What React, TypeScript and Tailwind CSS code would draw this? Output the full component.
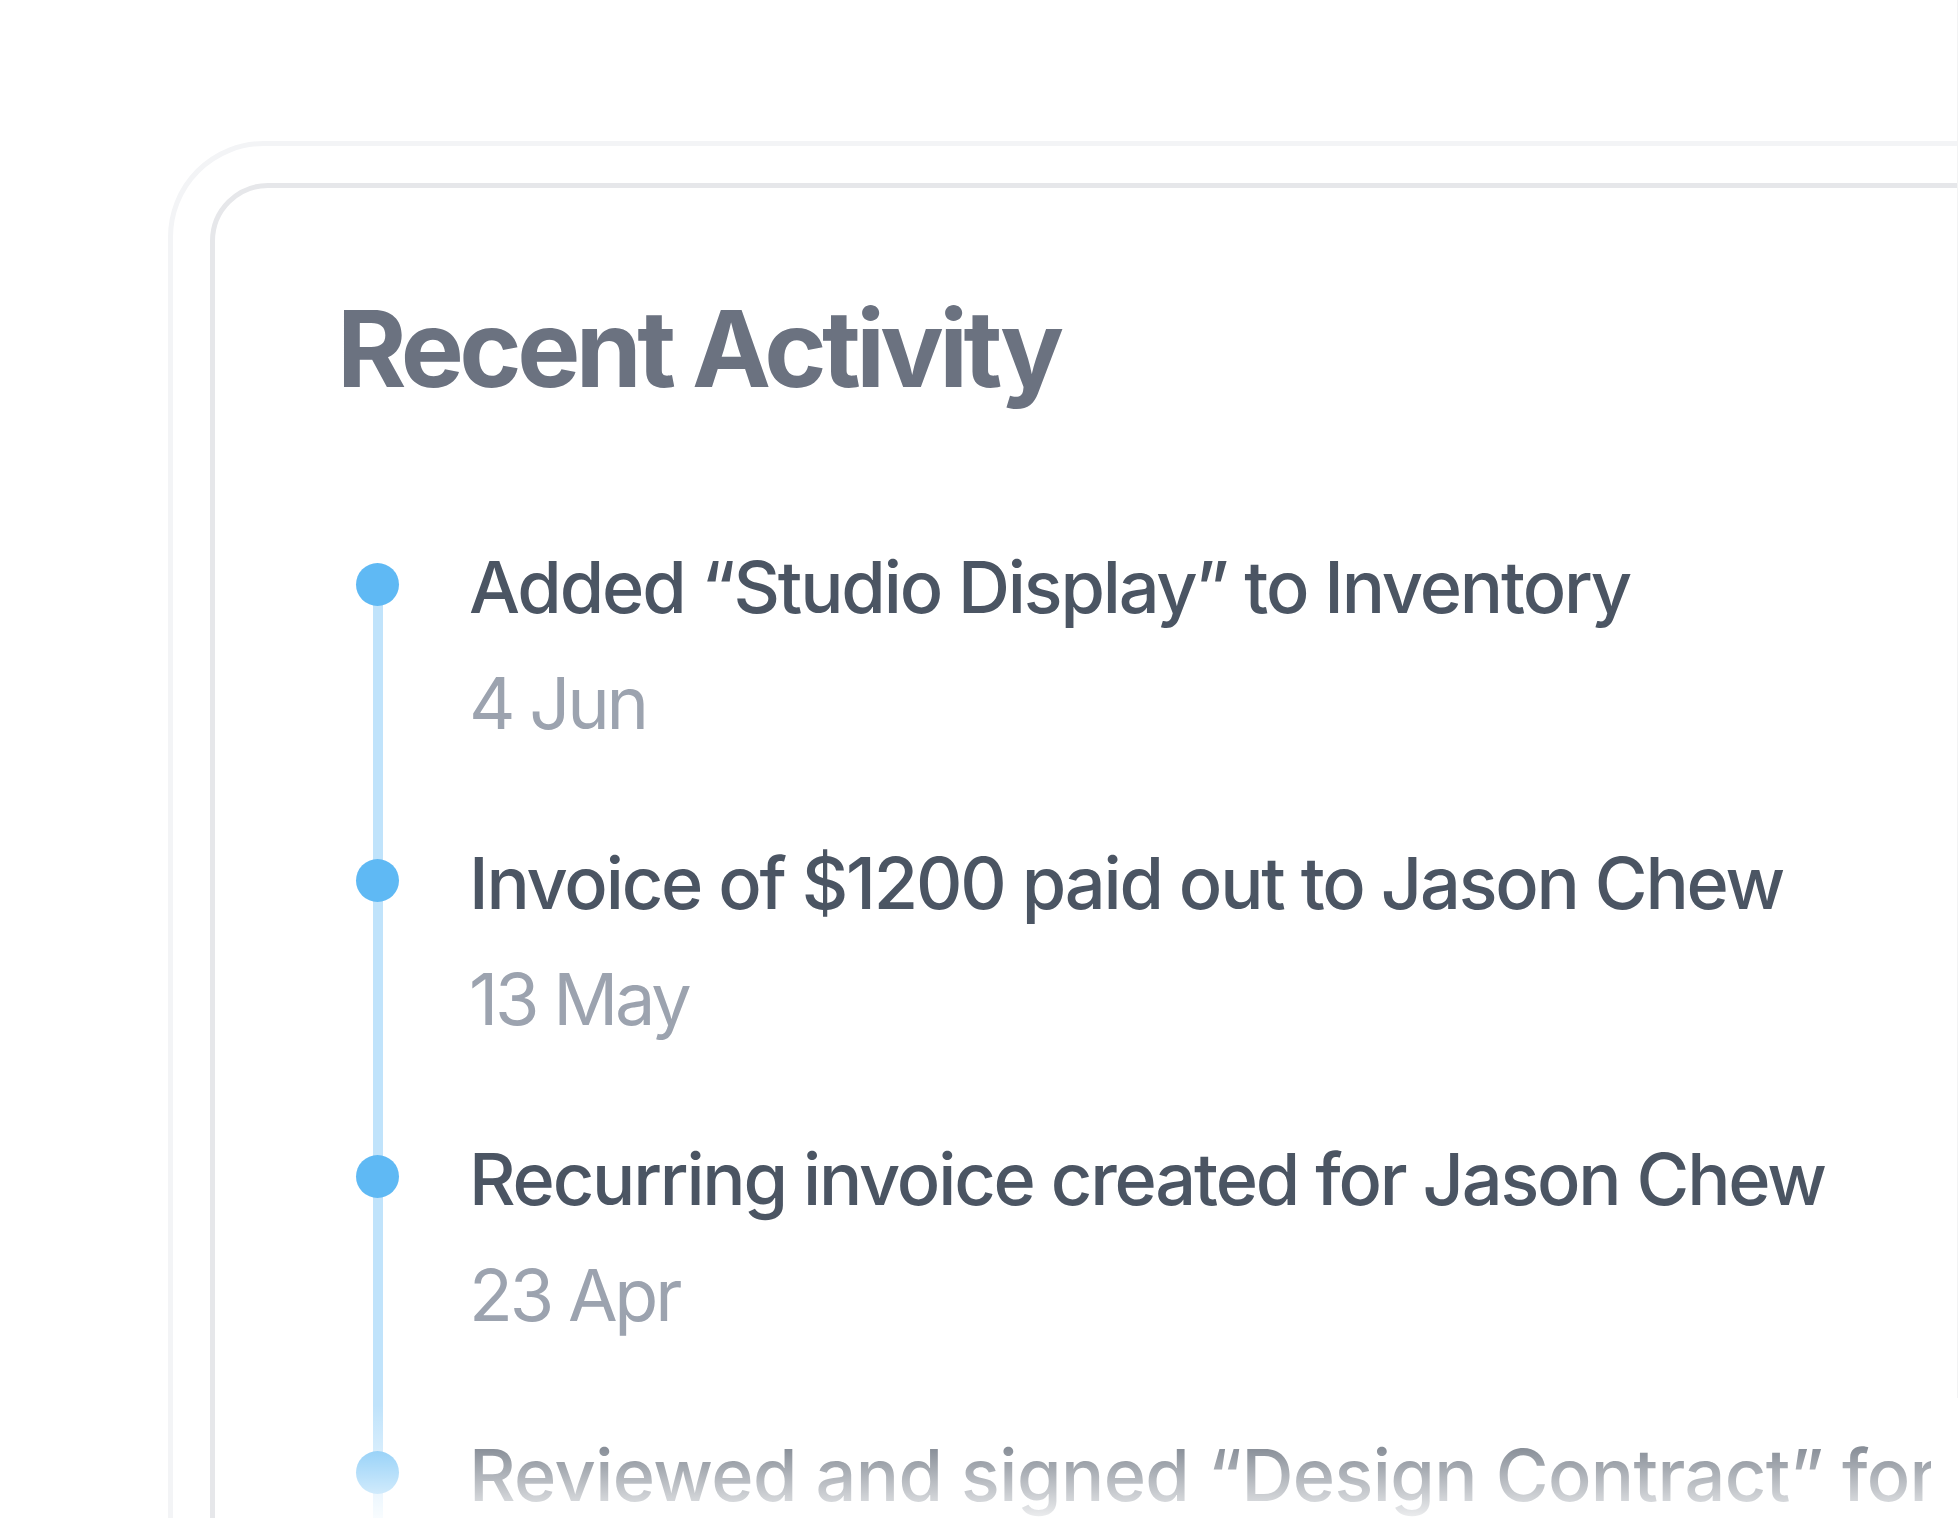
const activity = [
  { title: "Added “Studio Display” to Inventory", date: "4 Jun" },
  { title: "Invoice of $1200 paid out to Jason Chew", date: "13 May" },
  { title: "Recurring invoice created for Jason Chew", date: "23 Apr" },
  { title: "Reviewed and signed “Design Contract” for Jason Chew", date: "2 Apr" },
];

function TimelineItem({ title, date, last }: { title: string; date: string; last?: boolean }) {
  return (
    <li className="flex pb-[108px]">
      <div className="w-[113px] shrink-0 pt-[12px]">
        <span className="relative block h-[43px] w-[43px] rounded-full bg-[#5fb9f4]" />
      </div>
      <div className="w-[1462px] whitespace-nowrap">
        {last ? (
          // the faded last row runs off the card, clipped at the column edge
          <div className="-mb-[20px] overflow-hidden pb-[20px]">
            <p className="text-[72px] font-medium leading-none tracking-[-0.008em] text-[#4b5563]">{title}</p>
          </div>
        ) : (
          <p className="text-[72px] font-medium leading-none tracking-[-0.03em] text-[#4b5563]">{title}</p>
        )}
        <p className="mt-[44px] text-[72px] leading-none tracking-[-0.045em] text-[#9ca3af]">{date}</p>
      </div>
    </li>
  );
}

export default function App() {
  return (
    <div className="relative h-[1518px] w-[1958px] overflow-hidden bg-white pl-[168px] pt-[141px] font-['Inter',sans-serif]">
      <div className="w-[2200px] rounded-[96px] border-[5px] border-[#f3f4f6] p-[37px]">
        <div className="rounded-[58px] border-[5px] border-[#e6e7ea] bg-white pl-[122px] pt-[108px]">
          <h2 className="text-[106px] font-bold leading-none tracking-[-0.043em] text-[#6b7280]">
            Recent Activity
          </h2>
          <ol className="relative mt-[149px] pl-[19px]">
            <span className="absolute left-[36px] top-[33px] bottom-0 w-[10px] bg-[#c0e3fb]" />
            {activity.map((item, i) => (
              <TimelineItem key={item.title} {...item} last={i === activity.length - 1} />
            ))}
          </ol>
        </div>
      </div>
      <div className="absolute bottom-0 left-[222px] right-0 h-[113px] bg-gradient-to-b from-white/0 to-white/90" />
      <div className="absolute right-0 top-0 h-[1398px] w-px bg-[#f3f3f4]" />
    </div>
  );
}
